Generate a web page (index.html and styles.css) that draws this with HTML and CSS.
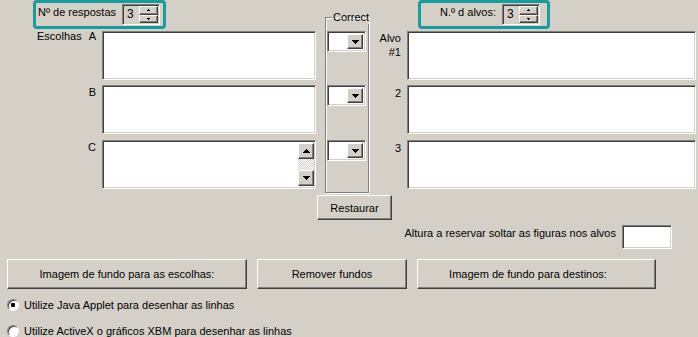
FILE: index.html
```html
<!DOCTYPE html>
<html lang="pt">
<head>
    <meta charset="UTF-8">
    <meta name="viewport" content="width=device-width, initial-scale=1.0">
    <title>Escolhas e alvos</title>
    <link rel="stylesheet" href="styles.css">
</head>
<body>

    <div class="editor">
        <div class="counter counter-choices">
            <label>Nº de respostas</label>
            <div class="spin">
                <span class="spin-value">3</span>
                <span class="spin-btns">
                    <span class="spin-btn"><svg width="3" height="2" shape-rendering="crispEdges"><path d="M1 0h1v1H1zM0 1h3v1H0z"/></svg></span>
                    <span class="spin-btn"><svg width="3" height="2" shape-rendering="crispEdges"><path d="M0 0h3v1H0zM1 1h1v1H1z"/></svg></span>
                </span>
            </div>
        </div>

        <div class="counter counter-targets">
            <label>N.º d alvos:</label>
            <div class="spin">
                <span class="spin-value">3</span>
                <span class="spin-btns">
                    <span class="spin-btn"><svg width="3" height="2" shape-rendering="crispEdges"><path d="M1 0h1v1H1zM0 1h3v1H0z"/></svg></span>
                    <span class="spin-btn"><svg width="3" height="2" shape-rendering="crispEdges"><path d="M0 0h3v1H0zM1 1h1v1H1z"/></svg></span>
                </span>
            </div>
        </div>

        <fieldset class="correct">
            <legend>Correct</legend>
        </fieldset>

        <!-- row A / #1 -->
        <div class="choice-label row-a first"><span>Escolhas</span><span>A</span></div>
        <textarea class="field choice row-a"></textarea>
        <div class="pick row-a"><span class="pick-btn"><svg width="7" height="4" shape-rendering="crispEdges"><path d="M0 0h7v1H0zM1 1h5v1H1zM2 2h3v1H2zM3 3h1v1H3z"/></svg></span></div>
        <div class="target-label row-a top">Alvo<br>#1</div>
        <textarea class="field target row-a"></textarea>

        <!-- row B / 2 -->
        <div class="choice-label row-b"><span>B</span></div>
        <textarea class="field choice row-b"></textarea>
        <div class="pick row-b"><span class="pick-btn"><svg width="7" height="4" shape-rendering="crispEdges"><path d="M0 0h7v1H0zM1 1h5v1H1zM2 2h3v1H2zM3 3h1v1H3z"/></svg></span></div>
        <div class="target-label row-b">2</div>
        <textarea class="field target row-b"></textarea>

        <!-- row C / 3 -->
        <div class="choice-label row-c"><span>C</span></div>
        <div class="field choice row-c scrolled">
            <div class="field-text"></div>
            <div class="scrollbar">
                <span class="scroll-btn"><svg width="7" height="4" shape-rendering="crispEdges"><path d="M3 0h1v1H3zM2 1h3v1H2zM1 2h5v1H1zM0 3h7v1H0z"/></svg></span>
                <span class="scroll-track"></span>
                <span class="scroll-btn"><svg width="7" height="4" shape-rendering="crispEdges"><path d="M0 0h7v1H0zM1 1h5v1H1zM2 2h3v1H2zM3 3h1v1H3z"/></svg></span>
            </div>
        </div>
        <div class="pick row-c"><span class="pick-btn"><svg width="7" height="4" shape-rendering="crispEdges"><path d="M0 0h7v1H0zM1 1h5v1H1zM2 2h3v1H2zM3 3h1v1H3z"/></svg></span></div>
        <div class="target-label row-c">3</div>
        <textarea class="field target row-c"></textarea>

        <button class="btn restore">Restaurar</button>
    </div>

    <div class="drop-row">
        <label for="drop-height">Altura a reservar soltar as figuras nos alvos</label>
        <input type="text" id="drop-height" class="drop-input">
    </div>

    <div class="bg-buttons">
        <button class="btn bg-choices">Imagem de fundo para as escolhas:</button>
        <button class="btn bg-remove">Remover fundos</button>
        <button class="btn bg-targets">Imagem de fundo para destinos:</button>
    </div>

    <div class="line-options">
        <label class="option"><input type="radio" name="lines" checked> Utilize Java Applet para desenhar as linhas</label>
        <label class="option"><input type="radio" name="lines"> Utilize ActiveX o gráficos XBM para desenhar as linhas</label>
    </div>

</body>
</html>
```

FILE: styles.css
```css
body {
    margin: 0;
    background-color: #d4d0c8;
    font-family: "Liberation Sans", Arial, sans-serif;
    font-size: 11px;
    line-height: 13px;
    color: #000;
    overflow: hidden;
}

/* raised / sunken 3d borders */
.btn, .spin-btn, .pick-btn, .scroll-btn {
    box-sizing: border-box;
    background-color: #d4d0c8;
    border: 1px solid;
    border-color: #fff #404040 #404040 #fff;
    box-shadow: inset -1px -1px #808080;
}
.field, .spin, .pick, .drop-input {
    box-sizing: border-box;
    border: 1px solid;
    border-color: #808080 #fff #fff #808080;
    box-shadow: inset 1px 1px #404040, inset -1px -1px #d4d0c8;
}

.btn {
    font-family: inherit;
    font-size: 11px;
    color: #000;
    padding: 0;
    cursor: pointer;
}

.editor {
    display: grid;
    grid-template-columns: 102px 214px 9px 44px 38px 289px;
    grid-template-rows: 31px 54px 55px 55px auto;
}

/* highlighted counters */
.counter {
    grid-row: 1;
    align-self: start;
    justify-self: start;
    display: flex;
    align-items: flex-start;
    gap: 6px;
    height: 29px;
    box-sizing: border-box;
    border: 3px solid #169c9a;
    border-radius: 4px;
}
.counter-choices {
    grid-column: 1 / 3;
    margin-left: 33px;
    width: 133px;
    padding-left: 2px;
}
.counter-targets {
    grid-column: 6;
    margin-left: 11px;
    width: 132px;
    justify-content: flex-end;
    padding-right: 7px;
}
.counter label {
    padding-top: 3px;
}
.spin {
    display: flex;
    width: 38px;
    height: 21px;
    margin-top: 1px;
    padding: 1px;
}
.spin-value {
    flex: 1;
    font-size: 12px;
    line-height: 17px;
    padding-left: 3px;
}
.spin-btns {
    display: flex;
    flex-direction: column;
    width: 19px;
}
.spin-btn {
    flex: 1;
    display: flex;
    align-items: center;
    justify-content: center;
}

/* group box */
.correct {
    grid-column: 4;
    grid-row: 1 / 5;
    margin: 11px 0 2px;
    padding: 0 0 0 6px;
    min-width: 0;
    border: 1px solid #808080;
    box-shadow: 1px 1px #fff, inset 1px 1px #fff;
}
.correct legend {
    padding: 0 1px;
    white-space: nowrap;
}

.row-a { grid-row: 2; }
.row-b { grid-row: 3; }
.row-c { grid-row: 4; }

.choice-label {
    grid-column: 1;
    display: flex;
    justify-content: flex-end;
    gap: 7px;
    padding-right: 6px;
    margin-top: 1px;
}
.choice-label.first {
    margin-top: -1px;
}
.target-label {
    grid-column: 5;
    text-align: right;
    padding-right: 6px;
    line-height: 14px;
    margin-top: 1px;
}
.target-label.top {
    margin-top: 0;
}

.field {
    align-self: start;
    height: 49px;
    margin: 0;
    padding: 0;
    background-color: #fff;
    resize: none;
    outline: none;
}
.choice { grid-column: 2; }
.target { grid-column: 6; }

.scrolled {
    display: flex;
    padding: 2px 1px 2px 2px;
}
.field-text {
    flex: 1;
}
.scrollbar {
    display: flex;
    flex-direction: column;
    width: 16px;
}
.scroll-btn {
    height: 16px;
    display: flex;
    align-items: center;
    justify-content: center;
}
.scroll-track {
    flex: 1;
    background: repeating-conic-gradient(#fff 0 25%, #d4d0c8 0 50%) 0 0 / 2px 2px;
}

/* dropdowns */
.pick {
    grid-column: 4;
    align-self: start;
    justify-self: start;
    margin-left: 2px;
    width: 39px;
    height: 21px;
    padding: 2px;
    display: flex;
    justify-content: flex-end;
    background-color: #fff;
}
.pick-btn {
    width: 16px;
    display: flex;
    align-items: center;
    justify-content: center;
}

.restore {
    grid-column: 3 / 6;
    grid-row: 5;
    justify-self: start;
    margin-left: 1px;
    width: 75px;
    height: 25px;
}

.drop-row {
    display: flex;
    justify-content: flex-end;
    align-items: flex-start;
    gap: 6px;
    padding-right: 26px;
    margin-top: 5px;
}
.drop-row label {
    padding-top: 2px;
}
.drop-input {
    width: 50px;
    height: 24px;
    margin: 0;
    background-color: #fff;
    outline: none;
}

.bg-buttons {
    display: flex;
    gap: 10px;
    padding-left: 7px;
    margin-top: 10px;
}
.bg-buttons .btn {
    height: 30px;
}
.bg-choices { width: 240px; }
.bg-remove { width: 150px; }
.bg-targets {
    width: 239px;
    padding-right: 17px;
}

.line-options {
    display: flex;
    flex-direction: column;
    gap: 12px;
    padding-left: 7px;
    margin-top: 9px;
}
.option {
    display: flex;
    align-items: center;
    gap: 5px;
    height: 14px;
}
.option input {
    appearance: none;
    width: 12px;
    height: 12px;
    margin: 0;
    border-radius: 50%;
    border: 1px solid;
    border-color: #808080 #fff #fff #808080;
    box-shadow: inset 1px 1px #404040;
    background: #fff;
}
.option input:checked {
    background: radial-gradient(circle, #000 0 2px, #fff 2.5px);
}
```
